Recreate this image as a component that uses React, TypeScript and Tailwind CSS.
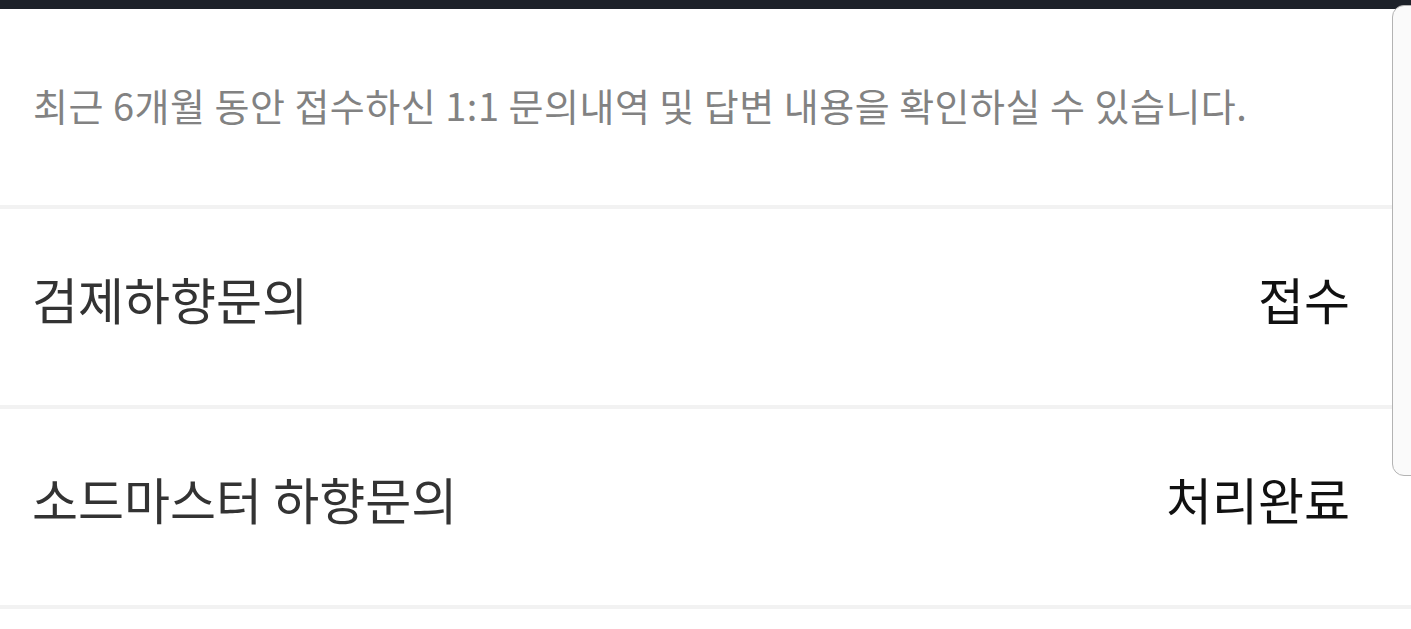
const rows = [
  { title: "검제하향문의", status: "접수" },
  { title: "소드마스터 하향문의", status: "처리완료" },
];

const App = () => {
  return (
    <div
      className="relative h-[629px] w-full overflow-hidden bg-white"
      style={{ fontFamily: '"Noto Sans CJK KR", "Noto Sans", sans-serif' }}
    >
      {/* top bar cut off */}
      <div className="h-[9px] w-full bg-[#1d2129]"></div>

      {/* notice */}
      <div className="flex h-[196px] items-center px-[33px] pb-[4px]">
        <p className="text-[38px] font-[400] leading-none tracking-[0.5px] text-[#828282]">
          최근 6개월 동안 접수하신 1:1 문의내역 및 답변 내용을 확인하실 수 있습니다.
        </p>
      </div>

      {/* list */}
      <ul className="border-t-[4px] border-[#f2f2f2]">
        {rows.map((row) => (
          <li
            key={row.title}
            className="flex h-[200px] items-center justify-between border-b-[4px] border-[#f2f2f2] pb-[18px] pl-[32px] pr-[61px]"
          >
            <span className="text-[50px] font-[400] leading-none text-[#333333]">
              {row.title}
            </span>
            <span className="text-[50px] font-[400] leading-none text-[#111111]">
              {row.status}
            </span>
          </li>
        ))}
      </ul>

      {/* edge panel handle */}
      <div className="absolute right-[-4px] top-[5px] h-[471px] w-[23px] rounded-l-[12px] border border-[#b3b3b3] bg-[#fafafa]"></div>
    </div>
  );
};

export default App;
